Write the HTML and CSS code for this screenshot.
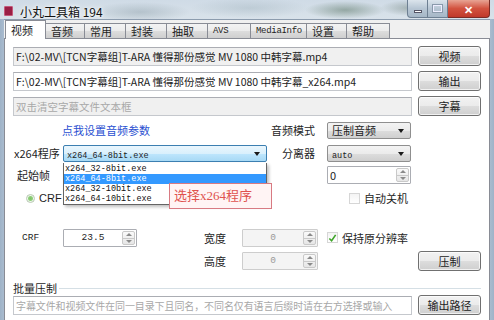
FILE: index.html
```html
<!DOCTYPE html>
<html>

<head>
    <link rel="stylesheet" href="styles.css">
</head>

<body>
    <div class="window">
        <div class="titlebar">
            <div class="appicon"></div>
            <div class="title">小丸工具箱 194</div>
            <div class="caption">
                <div class="cap-btn cap-min"><span class="min-bar"></span></div>
                <div class="cap-btn cap-max"><span class="max-box"></span></div>
                <div class="cap-btn cap-close">✕</div>
            </div>
        </div>
        <div class="client">
            <div class="tabs">
                <div class="tab active">视频</div>
                <div class="tab w39">音频</div>
                <div class="tab w41">常用</div>
                <div class="tab w41">封装</div>
                <div class="tab w41">抽取</div>
                <div class="tab w43 mono">AVS</div>
                <div class="tab w56 mono">MediaInfo</div>
                <div class="tab w40">设置</div>
                <div class="tab w43">帮助</div>
            </div>
            <div class="page">
                <div class="filerow">
                    <div class="field grey">F:\02-MV\[TCN字幕组]T-ARA 懂得那份感觉 MV 1080 中韩字幕.mp4</div>
                    <div class="btn">视频</div>
                </div>
                <div class="filerow">
                    <div class="field">F:\02-MV\[TCN字幕组]T-ARA 懂得那份感觉 MV 1080 中韩字幕_x264.mp4</div>
                    <div class="btn">输出</div>
                </div>
                <div class="filerow">
                    <div class="field grey hint">双击清空字幕文件文本框</div>
                    <div class="btn">字幕</div>
                </div>

                <div class="row row-a">
                    <div class="leftblock"><span class="link">点我设置音频参数</span></div>
                    <div class="rlabel">音频模式</div>
                    <div class="combo">压制音频<span class="arrow"></span></div>
                </div>
                <div class="row row-b">
                    <div class="label">x264程序</div>
                    <div class="combo combo-wide focus">
                        <span class="mono">x264_64-8bit.exe</span><span class="arrow"></span>
                        <div class="droplist">
                            <div class="opt">x264_32-8bit.exe</div>
                            <div class="opt sel">x264_64-8bit.exe</div>
                            <div class="opt">x264_32-10bit.exe</div>
                            <div class="opt">x264_64-10bit.exe</div>
                        </div>
                    </div>
                    <div class="rlabel">分离器</div>
                    <div class="combo"><span class="mono">auto</span><span class="arrow"></span></div>
                </div>
                <div class="row row-c">
                    <div class="label pl4">起始帧</div>
                    <div class="gap204"></div>
                    <div class="rlabel"></div>
                    <div class="spin w84"><span class="spin-val left">0</span><span class="spin-arrows"></span></div>
                </div>
                <div class="row row-d">
                    <div class="radio-wrap"><span class="radio"></span><span class="radio-text">CRF</span></div>
                    <div class="check-wrap"><span class="checkbox"></span><span>自动关机</span></div>
                </div>
                <div class="row row-e">
                    <div class="label pl9 mono crf">CRF</div>
                    <div class="spin w74"><span class="spin-val mono">23.5</span><span class="spin-arrows"></span></div>
                    <div class="mlabel">宽度</div>
                    <div class="spin w76 off"><span class="spin-val mono">0</span><span class="spin-arrows"></span></div>
                    <div class="check-wrap keep">
                        <span class="checkbox">
                            <svg width="10" height="10" viewBox="0 0 10 10"><path d="M1.5 5.5 L4 8 L8.5 1.5" fill="none" stroke="#3fa52a" stroke-width="1.8"/></svg>
                        </span><span>保持原分辨率</span>
                    </div>
                </div>
                <div class="row row-f">
                    <div class="gap124"></div>
                    <div class="mlabel">高度</div>
                    <div class="spin w76 off"><span class="spin-val mono">0</span><span class="spin-arrows"></span></div>
                    <div class="btn push">压制</div>
                </div>

                <div class="group">
                    <div class="legend"><span>批量压制</span></div>
                    <div class="filerow">
                        <div class="field hint small">字幕文件和视频文件在同一目录下且同名，不同名仅有语言后缀时请在右方选择或输入</div>
                        <div class="btn">输出路径</div>
                    </div>
                    <div class="filerow">
                        <div class="field"></div>
                        <div class="btn"></div>
                    </div>
                </div>

                <div class="callout">选择x264程序</div>
            </div>
        </div>
    </div>
</body>

</html>
```

FILE: styles.css
```css
* {
    padding: 0;
    margin: 0;
    box-sizing: border-box;
}

body {
    width: 494px;
    height: 320px;
    overflow: hidden;
    font-family: "Noto Sans CJK SC", "Liberation Sans", sans-serif;
    font-size: 11px;
    color: #1e1e1e;
}

.mono {
    font-family: "Liberation Mono", "Noto Sans CJK SC", monospace;
}

.window {
    width: 494px;
    height: 320px;
    overflow: hidden;
    display: flex;
    flex-direction: column;
    padding: 0 4px;
    background: linear-gradient(90deg, #9fb3c8, #b8c8d8 2%, #c9d6e2 50%, #b8c8d8 98%, #9fb3c8);
}

/* title bar, aero glass */
.titlebar {
    height: 19px;
    flex-shrink: 0;
    margin: 0 -4px;
    display: flex;
    align-items: center;
    padding-left: 4px;
    background:
        radial-gradient(ellipse 50px 10px at 140px 12px, rgba(120, 140, 150, 0.35), transparent),
        radial-gradient(ellipse 40px 9px at 345px 10px, rgba(70, 100, 80, 0.45), transparent),
        radial-gradient(ellipse 30px 8px at 410px 8px, rgba(90, 110, 100, 0.4), transparent),
        radial-gradient(ellipse 60px 10px at 250px 8px, rgba(150, 170, 180, 0.35), transparent),
        linear-gradient(#cfdbe6, #d9e2ea);
}

.appicon {
    width: 9px;
    height: 10px;
    margin-top: 3px;
    background: #9a1f45;
    border: 1px solid #c5587a;
    border-radius: 1px;
}

.title {
    margin-left: 7px;
    margin-top: 3px;
    font-size: 12px;
    color: #111;
    text-shadow: 0 0 6px #fff, 0 0 3px #fff;
}

.caption {
    margin-left: auto;
    margin-right: 4px;
    align-self: flex-start;
    display: flex;
    height: 18px;
}

.cap-btn {
    height: 18px;
    border: 1px solid #6d7f92;
    border-top: none;
    display: flex;
    align-items: center;
    justify-content: center;
}

.cap-min {
    width: 21px;
    border-radius: 0 0 0 4px;
    background: linear-gradient(#dbe4ec, #b7c6d4 50%, #a6b7c7);
}

.cap-max {
    width: 20px;
    border-left: none;
    background: linear-gradient(#dbe4ec, #b7c6d4 50%, #a6b7c7);
}

.cap-close {
    width: 42px;
    border-left: none;
    border-color: #7a2b25;
    border-radius: 0 0 4px 0;
    background: linear-gradient(#e8a494, #d2523f 50%, #c0392b);
    color: #fff;
    font-size: 11px;
    font-weight: bold;
}

.min-bar {
    width: 8px;
    height: 3px;
    margin-top: 5px;
    background: #fff;
    border: 1px solid #556;
}

.max-box {
    width: 9px;
    height: 7px;
    border: 1px solid #eef;
    outline: 1px solid #8a9aab;
}

/* client area */
.client {
    flex: 1;
    display: flex;
    flex-direction: column;
    background: #f0f0f0;
    border-top: 1px solid #8c9cae;
}

.tabs {
    height: 18px;
    flex-shrink: 0;
    display: flex;
    align-items: flex-end;
    padding-left: 1px;
    position: relative;
    z-index: 1;
}

.tab {
    height: 15px;
    border: 1px solid #898c95;
    border-bottom: none;
    margin-left: -1px;
    padding-left: 5px;
    line-height: 14px;
    font-size: 11px;
    background: linear-gradient(#f3f3f3, #ebebeb 50%, #dddddd 51%, #cfcfcf);
}

.tab.mono {
    font-size: 9px;
    letter-spacing: -0.3px;
}

.tab.active {
    width: 41px;
    height: 19px;
    margin-bottom: -1px;
    margin-left: 0;
    line-height: 18px;
    background: #fff;
    position: relative;
    z-index: 2;
}

.w39 { width: 40px; }
.w40 { width: 41px; }
.w41 { width: 42px; }
.w43 { width: 44px; }
.w56 { width: 57px; }

.page {
    flex: 1;
    background: #fff;
    border: 1px solid #898c95;
    border-bottom: none;
    padding: 7px 8px 0 8px;
    position: relative;
}

/* file rows */
.filerow {
    display: flex;
    align-items: center;
    height: 20px;
    margin-bottom: 5px;
}

.field {
    width: 399px;
    height: 19px;
    border: 1px solid #c5c8cd;
    border-top-color: #abadb3;
    padding-left: 2px;
    line-height: 17px;
    font-size: 10.5px;
    color: #222;
    white-space: nowrap;
    overflow: hidden;
    background: #fff;
}

.field.grey {
    background: #f0f0f0;
}

.field.hint {
    color: #a8a8a8;
}

.field.small {
    font-size: 10px;
    letter-spacing: -0.1px;
}

.btn {
    width: 63px;
    height: 20px;
    margin-left: auto;
    border: 1px solid #707070;
    border-radius: 3px;
    text-align: center;
    line-height: 18px;
    font-size: 11px;
    color: #222;
    background: linear-gradient(#f2f2f2, #ebebeb 50%, #dddddd 51%, #cfcfcf);
    box-shadow: inset 0 0 0 1px rgba(255, 255, 255, 0.7);
}

/* settings rows */
.row {
    display: flex;
    align-items: center;
    height: 18px;
}

.row-a { margin-top: 0; }
.row-b { margin-top: 5px; }
.row-c { margin-top: 4px; }
.row-d { margin-top: 7px; height: 14px; }
.row-e { margin-top: 23px; height: 19px; }
.row-f { margin-top: 4px; height: 19px; }

.leftblock {
    width: 254px;
    padding-left: 49px;
}

.link {
    color: #2a4fd1;
    font-size: 11px;
}

.label {
    width: 50px;
    padding-left: 1px;
    font-size: 11px;
}

.label.pl4 { padding-left: 4px; }
.label.pl9 { padding-left: 9px; }

.crf {
    font-size: 9.5px;
}

.rlabel {
    width: 60px;
    text-align: right;
    padding-right: 12px;
    font-size: 11px;
}

.mlabel {
    width: 105px;
    text-align: right;
    padding-right: 16px;
    font-size: 11px;
}

.gap204 { width: 204px; }
.gap124 { width: 124px; }

.combo {
    width: 84px;
    height: 17px;
    border: 1px solid #8f8f8f;
    border-radius: 2px;
    padding-left: 4px;
    line-height: 15px;
    font-size: 11px;
    position: relative;
    background: linear-gradient(#f3f3f3, #ebebeb 50%, #dddddd 51%, #cfcfcf);
}

.combo .mono {
    font-size: 8.5px;
}

.combo-wide {
    width: 204px;
    padding-left: 3px;
}

.combo.focus {
    border-color: #3c7fb1;
    background: linear-gradient(#eaf6fd, #d9f0fc 50%, #bee6fd 51%, #a7d9f5);
}

.arrow {
    position: absolute;
    right: 6px;
    top: 6px;
    border-left: 3px solid transparent;
    border-right: 3px solid transparent;
    border-top: 4px solid #1a1a1a;
}

.droplist {
    position: absolute;
    left: -1px;
    top: 17px;
    width: 204px;
    background: #fff;
    border: 1px solid #646464;
    border-top: none;
    padding-top: 1px;
    z-index: 5;
    box-shadow: 2px 2px 3px rgba(0, 0, 0, 0.25);
}

.opt {
    height: 10px;
    line-height: 10px;
    padding-left: 1px;
    font-family: "Liberation Mono", monospace;
    font-size: 8.5px;
    color: #111;
}

.opt.sel {
    background: #3399ff;
    color: #fff;
}

.spin {
    height: 18px;
    border: 1px solid #abadb3;
    border-radius: 1px;
    position: relative;
    background: #fff;
    line-height: 16px;
}

.spin.off {
    background: #f4f4f4;
    border-color: #cdcdcd;
    color: #9a9a9a;
}

.w84 { width: 84px; }
.w74 { width: 74px; }
.w76 { width: 76px; }

.spin-val {
    display: block;
    text-align: center;
    padding-right: 14px;
    font-size: 9.5px;
}

.spin-val.left {
    text-align: left;
    padding-left: 2px;
    font-size: 11px;
}

.spin-arrows {
    position: absolute;
    right: 1px;
    top: 1px;
    width: 13px;
    height: 14px;
    border: 1px solid #c9c9c9;
    border-radius: 2px;
    background:
        linear-gradient(#c9c9c9, #c9c9c9) center 6px / 11px 1px no-repeat,
        linear-gradient(#fafafa, #e6e6e6);
}

.spin-arrows::before,
.spin-arrows::after {
    content: "";
    position: absolute;
    left: 3px;
    border-left: 3px solid transparent;
    border-right: 3px solid transparent;
}

.spin-arrows::before {
    top: 1px;
    border-bottom: 3px solid #8a8a8a;
}

.spin-arrows::after {
    bottom: 1px;
    border-top: 3px solid #8a8a8a;
}

.radio-wrap {
    width: 336px;
    padding-left: 13px;
    display: flex;
    align-items: center;
}

.radio {
    width: 9px;
    height: 9px;
    border-radius: 50%;
    border: 1px solid #b9c9b4;
    background: radial-gradient(circle, #7fc26a 0, #8fcf7a 2px, #eef6ec 3px);
}

.radio-text {
    margin-left: 4px;
    font-family: "Liberation Sans", sans-serif;
    font-size: 11px;
}

.check-wrap {
    display: flex;
    align-items: center;
    font-size: 11px;
}

.check-wrap.keep {
    margin-left: 9px;
}

.checkbox {
    width: 11px;
    height: 11px;
    margin-right: 4px;
    border: 1px solid #d6d6d6;
    background: linear-gradient(#f4f4f4, #ffffff);
    display: flex;
    align-items: center;
    justify-content: center;
}

.push {
    margin-left: auto;
}

.group {
    margin-top: 12px;
}

.legend {
    display: flex;
    align-items: center;
    height: 12px;
    margin-bottom: 1px;
    font-size: 11px;
}

.legend::after {
    content: "";
    flex: 1;
    height: 1px;
    margin-left: 2px;
    margin-right: 0;
    background: #d5dfe5;
}

.callout {
    position: absolute;
    left: 164px;
    top: 144px;
    width: 103px;
    height: 26px;
    border: 1px solid #d87a82;
    background: #fff4f4;
    color: #e0524f;
    font-family: "Liberation Serif", "Noto Sans CJK SC", serif;
    font-size: 13px;
    line-height: 24px;
    padding-left: 4px;
    z-index: 6;
}
```
